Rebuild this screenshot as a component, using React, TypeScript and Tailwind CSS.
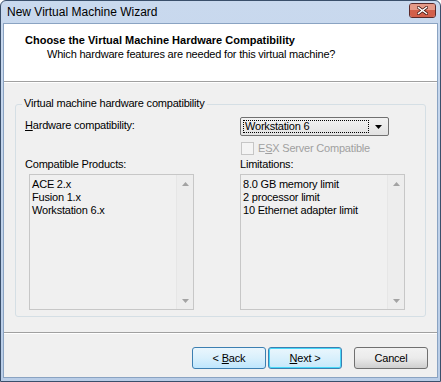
import React from 'react';

const dlg = { fontFamily: 'Tahoma, "Liberation Sans", Arial, sans-serif' };

function ListPanel({ items }: { items: string[] }) {
  return (
    <div className="flex h-[136px] w-[165px] border border-[#c7c7c7] bg-[#f0f0f0]">
      <div className="flex-1 pl-[2px] pt-[3px] text-[11px] leading-[13px] text-black">
        {items.map((t) => (
          <div key={t}>{t}</div>
        ))}
      </div>
      {/* disabled scrollbar */}
      <div className="flex w-[17px] flex-col justify-between border-l border-[#e6e6e6] bg-[#ededed]">
        <div className="flex h-[17px] items-center justify-center">
          <svg width="7" height="4" viewBox="0 0 7 4">
            <path d="M0 4 L3.5 0 L7 4 Z" fill="#a3a3a3" />
          </svg>
        </div>
        <div className="flex h-[17px] items-center justify-center">
          <svg width="7" height="4" viewBox="0 0 7 4">
            <path d="M0 0 L3.5 4 L7 0 Z" fill="#a3a3a3" />
          </svg>
        </div>
      </div>
    </div>
  );
}

function CloseButton() {
  return (
    <div className="mt-[-3px] flex h-[15px] w-[27px] flex-col overflow-hidden rounded-[3px] border border-[#5a2a2a]">
      <div className="relative flex flex-1 items-center justify-center bg-[#d2604b]">
        <div className="absolute inset-x-0 top-0 h-[6px] bg-[#e59a88]" />
        <svg className="relative" width="11" height="9" viewBox="0 0 11 9">
          <path d="M1.5 1.5 L9.5 7.5 M9.5 1.5 L1.5 7.5" stroke="#4a1a14" strokeWidth="3" strokeLinecap="square" />
          <path d="M1.5 1.5 L9.5 7.5 M9.5 1.5 L1.5 7.5" stroke="#ffffff" strokeWidth="1.5" strokeLinecap="square" />
        </svg>
      </div>
    </div>
  );
}

export default function App() {
  return (
    <div className="h-[382px] w-[441px] overflow-hidden bg-white tracking-[-0.2px]" style={dlg}>
      <div className="flex h-full w-full flex-col rounded-t-[6px] border border-[#3a4f6b] bg-gradient-to-b from-[#c9d9ee] to-[#b9cde7]">
        {/* title bar */}
        <div className="flex h-[22px] shrink-0 items-center justify-between pl-[6px] pr-[4px]">
          <span className="text-[12px] tracking-normal text-black" style={{ fontFamily: '"Liberation Sans", Arial, sans-serif' }}>
            New Virtual Machine Wizard
          </span>
          <CloseButton />
        </div>

        {/* client */}
        <div className="mx-[2px] mb-[3px] flex flex-1 flex-col border border-[#8aa3c2] bg-[#f0f0f0]">
          {/* header */}
          <div className="h-[58px] border-b border-[#a0a0a0] bg-white pt-[9px]">
            <div className="pl-[21px] text-[11px] font-bold leading-[14px] tracking-normal text-black">
              Choose the Virtual Machine Hardware Compatibility
            </div>
            <div className="pl-[43px] text-[11px] leading-[14px] text-black">
              Which hardware features are needed for this virtual machine?
            </div>
          </div>
          <div className="h-px bg-white" />

          {/* group */}
          <div className="relative mx-[11px] mt-[21px] h-[213px] rounded-[3px] border border-[#d5dfe5]">
            <div className="absolute left-[6px] top-[-8px] bg-[#f0f0f0] px-[2px] text-[11px] leading-[13px] text-black">
              Virtual machine hardware compatibility
            </div>
            <div className="flex pl-[9px] pt-[12px]">
              <div className="w-[215px] pt-[2px] text-[11px] leading-[13px] text-black">
                <span className="underline">H</span>ardware compatibility:
              </div>
              <div className="flex h-[19px] w-[149px] items-center rounded-[2px] border border-[#707070] bg-gradient-to-b from-[#f2f2f2] to-[#e2e2e2] pl-[2px]">
                <div className="flex h-[13px] w-[126px] items-center border border-dotted border-black pl-px text-[11px] text-black">
                  Workstation 6
                </div>
                <div className="flex flex-1 items-center justify-center">
                  <svg width="7" height="4" viewBox="0 0 7 4">
                    <path d="M0 0 L3.5 4 L7 0 Z" fill="#000" />
                  </svg>
                </div>
              </div>
            </div>
            <div className="flex items-center pl-[225px] pt-[6px]">
              <div className="h-[13px] w-[13px] border border-[#c6c6c6] bg-[#f4f4f4]" />
              <span className="pl-[4px] text-[11px] leading-[13px] text-[#a0a0a0]">
                E<span className="underline">S</span>X Server Compatible
              </span>
            </div>
            <div className="flex pl-[9px] pt-[3px] text-[11px] leading-[13px] text-black">
              <div className="w-[215px]">Compatible Products:</div>
              <div>Limitations:</div>
            </div>
            <div className="flex gap-[46px] pl-[13px] pt-[3px]">
              <ListPanel items={['ACE 2.x', 'Fusion 1.x', 'Workstation 6.x']} />
              <ListPanel items={['8.0 GB memory limit', '2 processor limit', '10 Ethernet adapter limit']} />
            </div>
          </div>

          {/* separator */}
          <div className="mt-[15px] h-px bg-[#a0a0a0]" />
          <div className="h-px bg-white" />

          {/* buttons */}
          <div className="flex justify-end gap-[2px] pr-[9px] pt-[13px] text-[11px] text-black">
            <button className="h-[22px] w-[74px] rounded-[3px] border border-[#3c7fb1] bg-gradient-to-b from-[#eaf6fd] via-[#d9f0fc] to-[#bee6fd]">
              &lt; <span className="underline">B</span>ack
            </button>
            <button className="h-[22px] w-[74px] rounded-[3px] border border-[#3c7fb1] bg-gradient-to-b from-[#eaf6fd] via-[#d9f0fc] to-[#c6e8fb] shadow-[inset_0_0_0_1px_#48d8f8]">
              <span className="underline">N</span>ext &gt;
            </button>
            <button className="ml-[10px] h-[22px] w-[74px] rounded-[3px] border border-[#707070] bg-gradient-to-b from-[#f2f2f2] via-[#ebebeb] to-[#cfcfcf]">
              Cancel
            </button>
          </div>
        </div>
      </div>
    </div>
  );
}
